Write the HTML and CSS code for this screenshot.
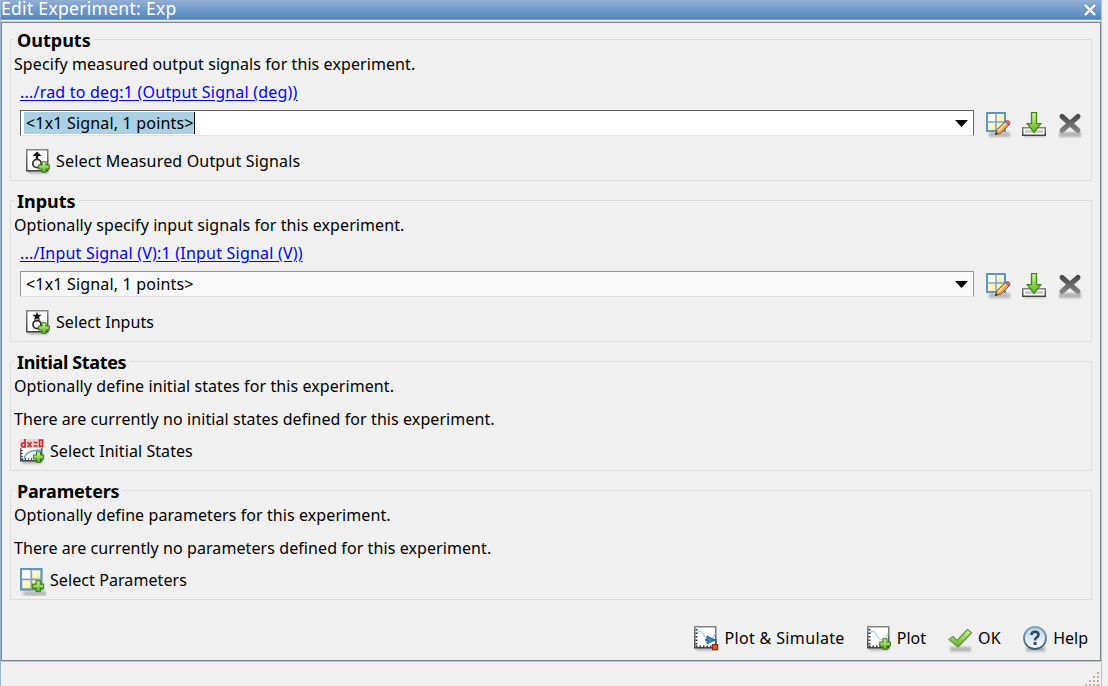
FILE: index.html
```html
<!DOCTYPE html>
<html lang="en">
<head>
<meta charset="utf-8">
<title>Edit Experiment: Exp</title>
<link rel="stylesheet" href="styles.css">
</head>
<body>
<svg class="defs" width="0" height="0">
  <defs>
    <linearGradient id="green" x1="0" y1="0" x2="0" y2="1"><stop offset="0" stop-color="#d5f39a"/><stop offset="1" stop-color="#5fb01c"/></linearGradient>
    <linearGradient id="yellow" x1="0" y1="0" x2="1" y2="1"><stop offset="0" stop-color="#fffef2"/><stop offset="1" stop-color="#fbe98c"/></linearGradient>
    <linearGradient id="gray" gradientUnits="userSpaceOnUse" x1="0" y1="2" x2="0" y2="21"><stop offset="0" stop-color="#444"/><stop offset="1" stop-color="#8c8c8c"/></linearGradient>
    <linearGradient id="frame" x1="0" y1="0" x2="0" y2="1"><stop offset="0" stop-color="#858585"/><stop offset="1" stop-color="#444"/></linearGradient>
    <linearGradient id="ring" x1="0" y1="0" x2="0" y2="1"><stop offset="0" stop-color="#86a5bf"/><stop offset="1" stop-color="#3b5c78"/></linearGradient>
    <linearGradient id="disc" x1="0" y1="0" x2="0" y2="1"><stop offset="0" stop-color="#b9d2e5"/><stop offset="1" stop-color="#fff"/></linearGradient>
    <filter id="soft" x="-30%" y="-100%" width="160%" height="300%"><feGaussianBlur stdDeviation="1.2"/></filter>
    <symbol id="plus" viewBox="0 0 12 12"><path d="M4 .7h4V4h3.300v4H8v3.300H4V8H.7V4H4z" fill="url(#green)" stroke="#397b1b" stroke-width="1.100"/></symbol>
    <symbol id="grid" viewBox="0 0 26 28">
      <rect x="3" y="20" width="21" height="5" fill="#777" opacity=".45" filter="url(#soft)"/>
      <rect x="1" y="1" width="18" height="18" fill="url(#yellow)" stroke="#5f95c0" stroke-width="2"/>
      <rect x="2" y="2" width="8" height="8" fill="#fff"/>
      <path d="M10 1v18M1 10h18" stroke="#79a5c9" stroke-width="1.500"/>
    </symbol>
    <symbol id="edit" viewBox="0 0 26 28">
      <use href="#grid" width="26" height="28"/>
      <path d="M9.500 22.500l1.500-5L20 9l4 3-9 9z" fill="#e8a850" stroke="#81552b"/>
      <path d="M12 19l8-8" stroke="#ffe0a0" stroke-width="1.500"/>
      <path d="M19.500 9.500l1.500-1q3 0 3 3l-1.500 1.500z" fill="#d76b93" stroke="#9c4162" stroke-width=".8"/>
      <path d="M9 23l1-3 2 2z" fill="#333"/>
    </symbol>
    <symbol id="import" viewBox="0 0 26 28">
      <rect x="2" y="21" width="21" height="4" fill="#777" opacity=".4" filter="url(#soft)"/>
      <rect x=".75" y="15.750" width="22.500" height="7.500" fill="#fff" stroke="url(#frame)" stroke-width="1.500"/>
      <path d="M3 18h18v3H3z" fill="#ccc"/>
      <path d="M9.500.7h5v11h4.300L12 20.500 5.200 11.700h4.300z" fill="url(#green)" stroke="#3f8a1d" stroke-width="1.300"/>
    </symbol>
    <symbol id="remove" viewBox="0 0 26 28">
      <rect x="1" y="20" width="22" height="5" fill="#777" opacity=".5" filter="url(#soft)"/>
      <path d="M4 4.500l16 14M20 4.500l-16 14" fill="none" stroke="url(#gray)" stroke-width="5" stroke-linecap="round"/>
    </symbol>
    <symbol id="sheet" viewBox="0 0 26 28">
      <rect x="2" y="20" width="20" height="4.500" fill="#777" opacity=".5" filter="url(#soft)"/>
      <rect x=".75" y=".75" width="21" height="21" fill="#fff" stroke="url(#frame)" stroke-width="1.500"/>
    </symbol>
    <symbol id="output" viewBox="0 0 26 28">
      <use href="#sheet" width="26" height="28"/>
      <path d="M11 2.500l4.500 4.500h-3.300v3H9.800V7H6.500z" fill="#111"/>
      <circle cx="11" cy="14.500" r="4.200" fill="none" stroke="#333" stroke-width="1.800"/>
      <use href="#plus" x="12" y="12" width="12" height="12"/>
    </symbol>
    <symbol id="input" viewBox="0 0 26 28">
      <use href="#sheet" width="26" height="28"/>
      <path d="M11 2l1.200 2.700h3.300l-2.500 2.200 1 3.100-3-1.500-3 1.500 1-3.100-2.500-2.200h3.300z" fill="#111"/>
      <circle cx="11" cy="14.500" r="4" fill="none" stroke="#333" stroke-width="1.800"/>
      <use href="#plus" x="12" y="12" width="12" height="12"/>
    </symbol>
    <symbol id="states" viewBox="0 0 26 28">
      <use href="#sheet" width="26" height="28"/>
      <path d="M4 20.500Q5 11 21 11" fill="none" stroke="#5f9dc9" stroke-width="1.300"/>
      <path d="M2 11v10M2 20h11" stroke="#555" stroke-width="2" stroke-dasharray="1 2"/>
      <rect width="24" height="9" fill="#f3d0d0"/>
      <path d="M5 0v8H2.500q-2-2 0-4H5M7.500 3l4 5M11.500 3l-4 5M13.500 3.500h4M13.500 7h4M19.500 1h3v6.500h-3z" fill="none" stroke="#c02c34" stroke-width="1.700"/>
      <use href="#plus" x="12.500" y="12" width="12" height="12"/>
    </symbol>
    <symbol id="params" viewBox="0 0 26 28">
      <use href="#grid" transform="scale(1.130)" width="26" height="28"/>
      <use href="#plus" x="12" y="12" width="12.500" height="12.500"/>
    </symbol>
    <symbol id="graph" viewBox="0 0 26 28">
      <use href="#sheet" width="26" height="28"/>
      <path d="M2 8q4-6 7 0t7 6q3 0 5-7" fill="none" stroke="#b5d5e9" stroke-width="1.400"/>
      <path d="M2.500 3v18M2 20.500h19" fill="none" stroke="#333" stroke-width="2" stroke-dasharray="1.500 2"/>
    </symbol>
    <symbol id="simulate" viewBox="0 0 26 28">
      <use href="#graph" width="26" height="28"/>
      <path d="M11 14h2M19 14h3v5" fill="none" stroke="#2c6792" stroke-width="1.500"/>
      <path d="M13 10l8 4-8 4z" fill="#378ac2" stroke="#235d87"/>
      <rect x="18.600" y="18.600" width="5" height="5" fill="#d75832" stroke="#8b2d17" stroke-width="1.200"/>
    </symbol>
    <symbol id="plot" viewBox="0 0 26 28">
      <use href="#graph" width="26" height="28"/>
      <use href="#plus" x="12" y="12" width="12" height="12"/>
    </symbol>
    <symbol id="ok" viewBox="0 0 26 28">
      <rect x="2" y="21" width="21" height="4.500" fill="#777" opacity=".5" filter="url(#soft)"/>
      <path d="M1 13.500l4-3 4 4L19.500 3.500l4 3.200L10 21z" fill="url(#green)" stroke="#70965a" stroke-width="1.400" stroke-linejoin="round"/>
    </symbol>
    <symbol id="help" viewBox="0 0 26 28">
      <rect x="3" y="21" width="19" height="4.500" fill="#777" opacity=".5" filter="url(#soft)"/>
      <circle cx="12" cy="12" r="11" fill="url(#disc)" stroke="url(#ring)" stroke-width="1.800"/>
      <path d="M8.500 9q0-3.200 3.500-3.200t3.500 3q0 1.600-1.800 2.700T12 14.500" fill="none" stroke="#30475b" stroke-width="2.600"/>
      <rect x="10.600" y="16" width="3" height="3" fill="#30475b"/>
    </symbol>
  </defs>
</svg>
<div class="window">
  <header class="titlebar">
    <span class="title">Edit Experiment: Exp</span>
    <svg class="close" viewBox="0 0 12 12"><path d="M1 1l10 10M11 1L1 11" stroke="#fff" stroke-width="2.300"/></svg>
  </header>
  <main class="content">
    <section class="group signals">
      <h2>Outputs</h2>
      <p>Specify measured output signals for this experiment.</p>
      <a class="link" href="#">.../rad to deg:1 (Output Signal (deg))</a>
      <div class="row">
        <div class="combo active"><span class="value selected">&lt;1x1 Signal, 1 points&gt;</span><svg class="arrow" viewBox="0 0 13 7"><path d="M0 0h13L6.500 7z"/></svg></div>
        <svg class="icon"><use href="#edit"/></svg>
        <svg class="icon"><use href="#import"/></svg>
        <svg class="icon"><use href="#remove"/></svg>
      </div>
      <div class="action loose"><svg class="icon"><use href="#output"/></svg><span>Select Measured Output Signals</span></div>
    </section>
    <section class="group signals">
      <h2>Inputs</h2>
      <p>Optionally specify input signals for this experiment.</p>
      <a class="link" href="#">.../Input Signal (V):1 (Input Signal (V))</a>
      <div class="row">
        <div class="combo"><span class="value">&lt;1x1 Signal, 1 points&gt;</span><svg class="arrow" viewBox="0 0 13 7"><path d="M0 0h13L6.500 7z"/></svg></div>
        <svg class="icon"><use href="#edit"/></svg>
        <svg class="icon"><use href="#import"/></svg>
        <svg class="icon"><use href="#remove"/></svg>
      </div>
      <div class="action"><svg class="icon"><use href="#input"/></svg><span>Select Inputs</span></div>
    </section>
    <section class="group plain">
      <h2 class="tight">Initial States</h2>
      <p>Optionally define initial states for this experiment.</p>
      <p class="empty">There are currently no initial states defined for this experiment.</p>
      <div class="action"><svg class="icon"><use href="#states"/></svg><span>Select Initial States</span></div>
    </section>
    <section class="group plain">
      <h2 class="snug">Parameters</h2>
      <p>Optionally define parameters for this experiment.</p>
      <p class="empty">There are currently no parameters defined for this experiment.</p>
      <div class="action"><svg class="icon"><use href="#params"/></svg><span>Select Parameters</span></div>
    </section>
    <footer class="buttons">
      <div class="button wide"><svg class="icon"><use href="#simulate"/></svg><span>Plot &amp; Simulate</span></div>
      <div class="button"><svg class="icon"><use href="#plot"/></svg><span>Plot</span></div>
      <div class="button wide"><svg class="icon"><use href="#ok"/></svg><span>OK</span></div>
      <div class="button"><svg class="icon"><use href="#help"/></svg><span>Help</span></div>
    </footer>
  </main>
  <div class="statusbar">
    <svg class="grip" viewBox="0 0 14 14"><path d="M12 0h2v2h-2zM8 4h2v2H8zM12 4h2v2h-2zM4 8h2v2H4zM8 8h2v2H8zM12 8h2v2h-2zM0 12h2v2H0zM4 12h2v2H4zM8 12h2v2H8zM12 12h2v2h-2z" fill="#b8b4a3"/></svg>
  </div>
</div>
</body>
</html>
```

FILE: styles.css
```css
* { box-sizing: border-box; }
body {
  margin: 0;
  width: 1108px;
  height: 686px;
  overflow: hidden;
  background: #f0f0f0;
  color: #000;
  font: 16px/22px "Noto Sans", "Open Sans", sans-serif;
}
.defs { display: block; width: 0; height: 0; position: absolute; }
.window {
  width: 1102px;
  height: 686px;
  border-left: 1px solid #99b4d1;
  border-right: 1px solid #b0c2d8;
  display: flex;
  flex-direction: column;
}
.titlebar {
  height: 22px;
  flex: none;
  display: flex;
  justify-content: space-between;
  background: linear-gradient(#91afd3, #5088c0 19px, #8b95a2 19px, #8b95a2 20px, #f0f0f0 20px, #f0f0f0 21px, #c5d1df 21px);
}
.title { height: 18px; color: #fff; font-size: 17.5px; line-height: 17px; letter-spacing: .3px; white-space: nowrap; }
.close { width: 12px; height: 12px; margin: 4px 5px 0 0; }
.content {
  height: 639px;
  flex: none;
  border: 1px solid #7b8694;
  padding: 16px 8px 0 8px;
}
.group {
  border: 1px solid #dcdcdc;
  margin-bottom: 19px;
  padding: 0 0 0 3px;
}
.signals { height: 142px; }
.plain { height: 110px; }
h2 {
  width: max-content;
  height: 22px;
  margin: -11px 0 0;
  padding: 0 3px;
  background: #f0f0f0;
  font-size: 18px;
  font-weight: 700;
  line-height: 22px;
  white-space: nowrap;
}
.tight { letter-spacing: -.35px; }
.snug { letter-spacing: -.2px; }
p { margin: 2px 0 0; height: 22px; white-space: nowrap; width: max-content; letter-spacing: .085px; }
.link {
  display: block;
  width: max-content;
  margin: 6px 0 0 6px;
  color: #00f;
  text-decoration: underline;
  text-underline-offset: 2px;
  letter-spacing: .21px;
  white-space: nowrap;
}
.row { display: flex; margin: 7px 0 0 6px; height: 26px; }
.combo {
  width: 954px;
  flex: none;
  height: 26px;
  margin-right: 12px;
  border: 1px solid #969696;
  border-bottom-color: #e3e3e3;
  background: #f8f8f8;
  display: flex;
  align-items: center;
  justify-content: space-between;
  padding: 0 5px 0 3px;
}
.combo.active { background: #fff; border-color: #646464; border-bottom-color: #e3e3e3; }
.value { height: 22px; padding: 0 0 0 2px; line-height: 22px; letter-spacing: .18px; white-space: nowrap; border-right: 1px solid transparent; }
.selected { background: #a9d0e3; border-right-color: #000; }
.arrow { width: 13px; height: 7px; }
.icon { width: 26px; height: 28px; flex: none; }
.row .icon { margin: 2px 10px 0 0; }
.row .icon:last-child { margin-right: 0; }
.action { display: flex; margin: 13px 0 0 12px; height: 28px; letter-spacing: .08px; white-space: nowrap; }
.loose { letter-spacing: .17px; }
.action span { margin-left: 4px; line-height: 24px; }
.plain .action { margin: 9px 0 0 6px; }
.empty { margin-top: 11px; }
.buttons { display: flex; justify-content: flex-end; gap: 22px; margin: 26px 4px 0 0; height: 28px; }
.button { display: flex; white-space: nowrap; }
.button span { margin-left: 4px; line-height: 24px; }
.wide { letter-spacing: .36px; }
.statusbar { flex: 1; border-top: 1px solid #b7c6d6; display: flex; justify-content: flex-end; padding: 10px 2px 0 0; }
.grip { width: 14px; height: 14px; }
```
